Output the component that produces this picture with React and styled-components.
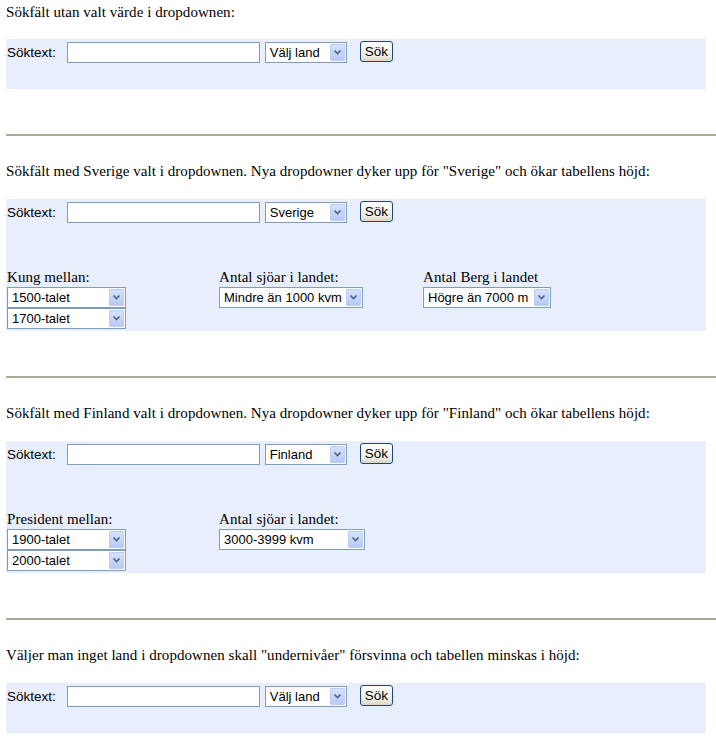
import styled, { createGlobalStyle } from "styled-components";

const GlobalStyle = createGlobalStyle`
  body {
    margin: 0;
    background: #ffffff;
    color: #000000;
    font-family: "Liberation Serif", "Times New Roman", serif;
  }
`;

const Page = styled.div`
  width: 716px;
  padding: 3px 0 0 6px;
  box-sizing: border-box;
`;

const Heading = styled.p`
  margin: ${({ $first }) => ($first ? "0" : "26px")} 0 ${({ $first }) => ($first ? "18px" : "19px")} 0;
  font-size: 15px;
  line-height: 18px;
  letter-spacing: 0.05px;
`;

const Panel = styled.div`
  width: 700px;
  background: #e8eefc;
  box-sizing: border-box;
  padding: 2px 0 ${({ $expanded }) => ($expanded ? "2px" : "26px")} 1px;
`;

const Divider = styled.hr`
  margin: 45px 0 0 0;
  height: 2px;
  border: none;
  background: #aca899;
  width: 710px;
`;

const SearchRow = styled.div`
  display: flex;
  align-items: center;
  height: 22px;
  font-family: "Liberation Sans", Tahoma, sans-serif;
  font-size: 13px;
`;

const Label = styled.span`
  font-size: 13.5px;
  margin-right: 11px;
`;

const TextInput = styled.input`
  width: 193px;
  height: 21px;
  box-sizing: border-box;
  border: 1px solid #7f9db9;
  background: #ffffff;
  margin: 0 5px 0 0;
  padding: 0 3px;
  font: inherit;
  outline: none;
`;

const SelectBox = styled.div`
  display: inline-flex;
  align-items: stretch;
  width: ${({ $width }) => $width}px;
  height: 21px;
  box-sizing: border-box;
  border: 1px solid #7f9db9;
  background: #ffffff;
  padding: 1px;
  font-family: "Liberation Sans", Tahoma, sans-serif;
  font-size: 13px;
`;

const NativeSelect = styled.select`
  appearance: none;
  -webkit-appearance: none;
  flex: 1;
  min-width: 0;
  border: none;
  background: transparent;
  padding: 0 0 0 3px;
  font: inherit;
  color: #000;
  outline: none;
`;

const ArrowBox = styled.span`
  width: 15px;
  flex: none;
  display: flex;
  align-items: center;
  justify-content: center;
  box-sizing: border-box;
  border: 1px solid #bccdf5;
  border-radius: 1px;
  background: linear-gradient(#d6e1fd, #b7c9f4);
`;

const SearchButton = styled.button`
  margin: 0 0 0 13px;
  height: 21px;
  width: 33px;
  position: relative;
  top: -1px;
  box-sizing: border-box;
  border: 1px solid #1c4677;
  border-radius: 3px;
  background: linear-gradient(#ffffff, #f0efe7 70%, #d9d6c6);
  padding: 0;
  font-family: "Liberation Sans", Tahoma, sans-serif;
  font-size: 13.5px;
  color: #000;
`;

const SubGrid = styled.div`
  display: grid;
  grid-template-columns: 212px 204px auto;
  margin-top: 46px;
  align-items: start;
`;

const Column = styled.div`
  display: flex;
  flex-direction: column;
  align-items: flex-start;
`;

const ColumnLabel = styled.div`
  font-size: 15px;
  line-height: 17px;
  letter-spacing: 0.05px;
  margin-bottom: 1px;
`;

const Chevron = () => (
  <svg width="9" height="7" viewBox="0 0 9 7">
    <path d="M1.5 1.5 L4.5 4.5 L7.5 1.5" fill="none" stroke="#4d6185" strokeWidth="1.6" />
  </svg>
);

const Dropdown = ({ value, width }) => (
  <SelectBox $width={width}>
    <NativeSelect defaultValue={value}>
      <option>{value}</option>
    </NativeSelect>
    <ArrowBox>
      <Chevron />
    </ArrowBox>
  </SelectBox>
);

const SearchFields = ({ country }) => (
  <SearchRow>
    <Label>Söktext:</Label>
    <TextInput type="text" />
    <Dropdown value={country} width={82} />
    <SearchButton>Sök</SearchButton>
  </SearchRow>
);

const sections = [
  {
    text: "Sökfält utan valt värde i dropdownen:",
    country: "Välj land",
    columns: [],
  },
  {
    text: 'Sökfält med Sverige valt i dropdownen. Nya dropdowner dyker upp för "Sverige" och ökar tabellens höjd:',
    country: "Sverige",
    columns: [
      { label: "Kung mellan:", width: 119, options: ["1500-talet", "1700-talet"] },
      { label: "Antal sjöar i landet:", width: 144, options: ["Mindre än 1000 kvm"] },
      { label: "Antal Berg i landet", width: 128, options: ["Högre än 7000 m"] },
    ],
  },
  {
    text: 'Sökfält med Finland valt i dropdownen. Nya dropdowner dyker upp för "Finland" och ökar tabellens höjd:',
    country: "Finland",
    columns: [
      { label: "President mellan:", width: 119, options: ["1900-talet", "2000-talet"] },
      { label: "Antal sjöar i landet:", width: 146, options: ["3000-3999 kvm"] },
    ],
  },
  {
    text: 'Väljer man inget land i dropdownen skall "undernivåer" försvinna och tabellen minskas i höjd:',
    country: "Välj land",
    columns: [],
  },
];

export default function App() {
  return (
    <Page>
      <GlobalStyle />
      {sections.map((section, i) => (
        <div key={i}>
          {i > 0 && <Divider />}
          <Heading $first={i === 0}>{section.text}</Heading>
          <Panel $expanded={section.columns.length > 0}>
            <SearchFields country={section.country} />
            {section.columns.length > 0 && (
              <SubGrid>
                {section.columns.map((col) => (
                  <Column key={col.label}>
                    <ColumnLabel>{col.label}</ColumnLabel>
                    {col.options.map((opt) => (
                      <Dropdown key={opt} value={opt} width={col.width} />
                    ))}
                  </Column>
                ))}
              </SubGrid>
            )}
          </Panel>
        </div>
      ))}
    </Page>
  );
}
